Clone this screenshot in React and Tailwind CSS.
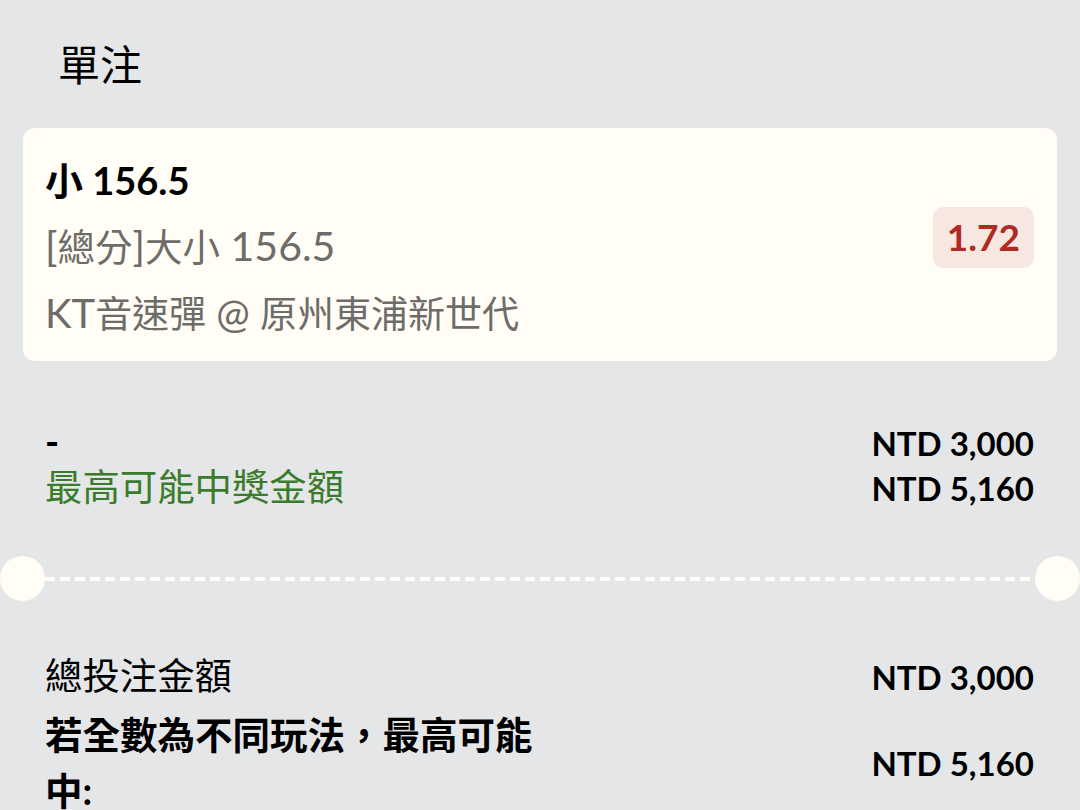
export default function App() {
  return (
    <div className="w-[1080px] h-[810px] overflow-hidden bg-[#e5e6e8] font-['Lato','Noto_Sans_CJK_TC',sans-serif] text-black">
      <div className="pt-[40px] pl-[58px] text-[42px] leading-[50px]">單注</div>

      <div className="mx-[23px] mt-[38px] h-[233px] rounded-[12px] bg-[#fffdf5] pl-[22px] pr-[23px] pt-[19px] flex items-center justify-between">
        <div className="self-start leading-[66px]">
          <div className="text-[38px] font-bold">小 156.5</div>
          <div className="text-[41px] text-[#6e6c68]">
            [<span className="text-[37.5px]">總分</span>]<span className="text-[37.5px]">大小</span> 156.5
          </div>
          <div className="text-[40px] text-[#6e6c68]">
            KT<span className="text-[37px]">音速彈</span> @ <span className="text-[37px]">原州東浦新世代</span>
          </div>
        </div>
        <div className="mb-[34px] ml-[3px] rounded-[10px] bg-[#f6e7e1] px-[14px] h-[61px] flex items-center text-[37px] font-bold text-[#b02a24]">
          1.72
        </div>
      </div>

      <div className="mt-[58px] pl-[45px] pr-[46px]">
        <div className="flex items-baseline justify-between leading-[44px]">
          <span className="text-[38px] font-bold">-</span>
          <span className="text-[33px] font-bold">NTD 3,000</span>
        </div>
        <div className="flex items-baseline justify-between leading-[44px]">
          <span className="text-[37.4px] text-[#3b7b2d]">最高可能中獎金額</span>
          <span className="text-[33px] font-bold">NTD 5,160</span>
        </div>
      </div>

      <div className="mt-[46px] flex items-center">
        <div className="h-[45px] w-[45px] shrink-0 rounded-full bg-[#fffdf5]" />
        <div className="h-[4px] flex-1 bg-[repeating-linear-gradient(90deg,#fffdf5_0_10px,transparent_10px_15px)]" />
        <div className="h-[45px] w-[45px] shrink-0 rounded-full bg-[#fffdf5]" />
      </div>

      <div className="mt-[53px] pl-[45px] pr-[46px]">
        <div className="flex items-baseline justify-between leading-[44px]">
          <span className="text-[37.4px]">總投注金額</span>
          <span className="text-[33px] font-bold">NTD 3,000</span>
        </div>
        <div className="mt-[8px] grid grid-cols-2 items-center">
          <div className="text-[37.5px] font-bold leading-[56px]">若全數為不同玩法，最高可能中:</div>
          <div className="text-right text-[33px] font-bold leading-[44px]">NTD 5,160</div>
        </div>
      </div>
    </div>
  );
}
